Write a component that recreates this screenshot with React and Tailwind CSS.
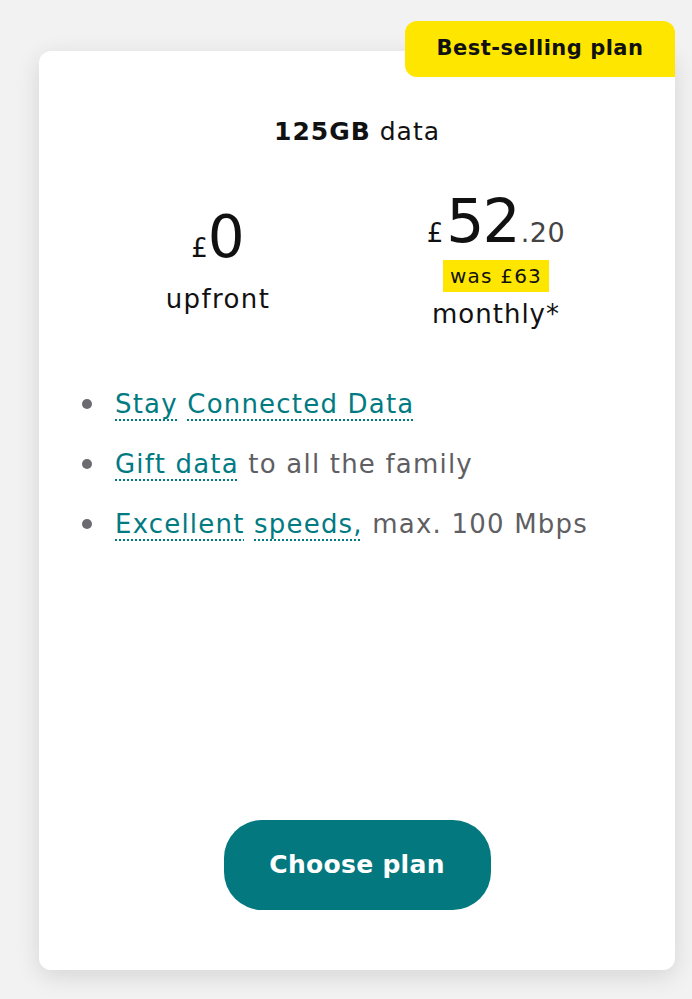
import React from 'react'

const features = [
  { link: ['Stay', 'Connected Data'], rest: '' },
  { link: ['Gift data'], rest: ' to all the family' },
  { link: ['Excellent', 'speeds,'], rest: ' max. 100 Mbps' },
]

const App = () => {
  return (
    <div className="min-h-[999px] w-full bg-[#f2f2f2] pt-[51px] pl-[39px] pr-[17px] pb-[29px] font-['DejaVu_Sans',sans-serif]">
      {/* plan card */}
      <div className="relative flex h-[919px] flex-col rounded-xl bg-white px-10 pb-[60px] shadow-[0_6px_24px_rgba(0,0,0,0.12)]">
        {/* badge */}
        <div className="absolute right-0 top-[-30px] flex h-[56px] w-[270px] items-center justify-center rounded-t-xl rounded-bl-xl bg-[#ffe600] text-[21px] font-bold tracking-[0.5px] text-[#111]">
          Best-selling plan
        </div>

        <p className="mt-[64px] text-center text-[25px] leading-[34px] tracking-[1px] text-[#111]">
          <span className="font-bold">125GB</span> data
        </p>

        {/* prices */}
        <div className="mt-[40px] flex">
          <div className="flex flex-1 flex-col items-center pt-[16px]">
            <div className="flex items-baseline text-[#111]">
              <span className="text-[26px]">£</span>
              <span className="text-[58px] leading-[64px]">0</span>
            </div>
            <span className="mt-[13px] text-[26px] leading-[34px] tracking-[1.4px] text-[#111]">upfront</span>
          </div>
          <div className="flex flex-1 flex-col items-center">
            <div className="flex items-baseline">
              <span className="mr-[3px] text-[26px] text-[#111]">£</span>
              <span className="text-[60px] leading-[64px] tracking-[-2px] text-[#111]">52</span>
              <span className="ml-[2px] text-[27px] tracking-[0.5px] text-[#444]">.20</span>
            </div>
            <span className="mt-[6px] flex h-[32px] w-[106px] items-center justify-center bg-[#ffe600] text-[20px] tracking-[1.2px] text-[#111]">
              was £63
            </span>
            <span className="mt-[5px] text-[26px] leading-[34px] tracking-[1px] text-[#111]">monthly*</span>
          </div>
        </div>

        {/* features */}
        <ul className="mt-[56px] flex flex-col gap-[26px] pl-[3px]">
          {features.map((f, i) => (
            <li key={i} className="flex items-center text-[26px] leading-[34px] tracking-[1.2px] text-[#5f5f63]">
              <span className="mr-[23px] h-[10px] w-[10px] shrink-0 rounded-full bg-[#6b6b70]" />
              <span>
                {f.link.map((w, j) => (
                  <React.Fragment key={j}>
                    {j > 0 && ' '}
                    <span className="text-[#017b82] underline decoration-dotted decoration-[#017b82] decoration-2 underline-offset-[7px]">
                      {w}
                    </span>
                  </React.Fragment>
                ))}
                {f.rest}
              </span>
            </li>
          ))}
        </ul>

        {/* choose plan btn */}
        <button className="mx-auto mt-auto flex h-[90px] w-[267px] items-center justify-center rounded-[38px] bg-[#03787f] text-[25px] font-bold tracking-[0.3px] text-white">
          Choose plan
        </button>
      </div>
    </div>
  )
}

export default App
